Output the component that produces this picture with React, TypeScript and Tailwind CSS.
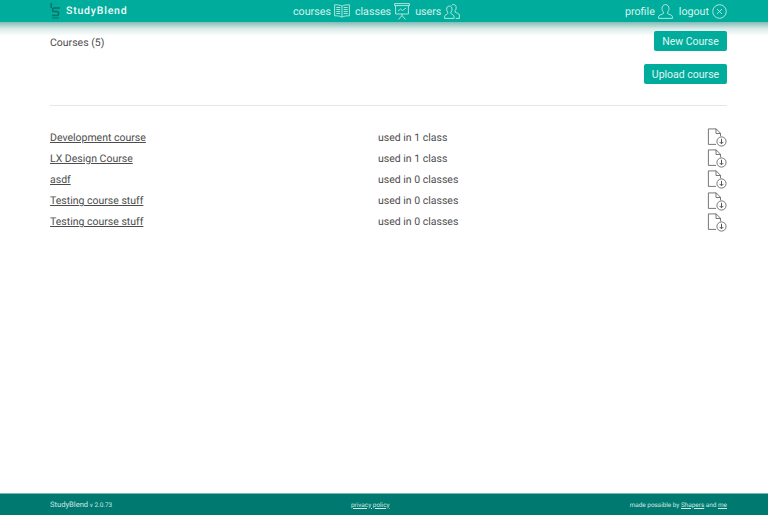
import { ReactNode } from "react";

const courses = [
  { name: "Development course", usage: "used in 1 class" },
  { name: "LX Design Course", usage: "used in 1 class" },
  { name: "asdf", usage: "used in 0 classes" },
  { name: "Testing course stuff", usage: "used in 0 classes" },
  { name: "Testing course stuff", usage: "used in 0 classes" },
];

function BookIcon() {
  return (
    <svg width="16" height="14" viewBox="0 0 16 14" fill="none" stroke="currentColor" strokeWidth="0.8">
      <path d="M8 2.200C6.500 1 3.500.8.600.8v11c3 0 5.900.2 7.400 1.400 1.500-1.200 4.400-1.400 7.400-1.400V.8C12.500.8 9.500 1 8 2.200z" />
      <path d="M8 2.200v11M2.300 3.500h4M2.300 5.500h4M2.300 7.500h4M2.300 9.500h4M9.700 3.500h4M9.700 5.500h4M9.700 7.500h4M9.700 9.500h4" />
    </svg>
  );
}

function BoardIcon() {
  return (
    <svg width="16" height="17" viewBox="0 0 16 17" fill="none" stroke="currentColor" strokeWidth="0.8">
      <path d="M.6.6h14.800v2H.6zM1.600 2.600v8.400h12.800V2.600" />
      <path d="M4 8l2.500-2 2 1.500L12 5M8 11v1.500M8 12.500L4.500 16.500M8 12.500l3.500 4" />
    </svg>
  );
}

function UsersIcon() {
  return (
    <svg width="16" height="15" viewBox="0 0 16 15" fill="none" stroke="currentColor" strokeWidth="0.8">
      <path d="M.6 14.400h9.400v-2c0-1.500-2.300-2-3.100-2.800V8.100c.8-.8 1.100-1.800 1.100-3 0-1.800-1-3-2.700-3s-2.700 1.200-2.700 3c0 1.200.3 2.200 1.100 3v1.500C3.500 10.400.6 10.900.6 12.400z" />
      <path d="M7.500 1.300C8 .8 8.700.6 9.500.6c1.700 0 2.700 1.200 2.700 3 0 1.200-.3 2.200-1.100 3v1.500c.8.800 4.300 1.300 4.300 2.800v3.500h-3.800" />
    </svg>
  );
}

function ProfileIcon() {
  return (
    <svg width="15" height="15" viewBox="0 0 15 15" fill="none" stroke="currentColor" strokeWidth="0.8">
      <path d="M.6 14.400h13.800v-1.800c0-1.600-3.700-2.200-4.700-3V7.800c1-.9 1.300-2 1.300-3.300C11 2.200 9.500.6 7.500.6S4 2.200 4 4.500c0 1.300.3 2.400 1.300 3.300v1.800c-1 .8-4.700 1.400-4.700 3z" />
    </svg>
  );
}

function CloseCircleIcon() {
  return (
    <svg width="15" height="15" viewBox="0 0 15 15" fill="none" stroke="currentColor" strokeWidth="0.8">
      <circle cx="7.500" cy="7.500" r="6.800" />
      <path d="M5 5l5 5M10 5l-5 5" />
    </svg>
  );
}

function LogoIcon() {
  return (
    <svg width="11" height="16" viewBox="0 0 11 16" fill="none" stroke="#0a6f68" strokeWidth="1.500">
      <path d="M1.200 0v5" />
      <path d="M10 5H4C2 5 2 8.500 4 8.500h3c2.200 0 2.200 4-.2 4H2" />
      <path d="M2 15h7" strokeWidth="1" />
    </svg>
  );
}

function FileDownloadIcon() {
  return (
    <svg width="20" height="19" viewBox="0 0 20 19" fill="none" stroke="#555" strokeWidth="0.8">
      <path d="M9 16.400H1.400V.9h7.800l4.300 4.400v3" />
      <path d="M9 .9v4.600h4.500" />
      <circle cx="14.500" cy="13.500" r="4.600" />
      <path d="M14.500 10.800v5M12.600 13.900l1.900 1.900 1.900-1.900" strokeWidth="1" />
    </svg>
  );
}

function NavLink({ label, icon }: { label: string; icon: ReactNode }) {
  return (
    <a className="flex items-center gap-[3px]">
      <span className="pt-px">{label}</span>
      {icon}
    </a>
  );
}

export default function App() {
  return (
    <div className="relative flex h-[515px] flex-col overflow-hidden bg-white font-['Roboto',sans-serif] text-[10.500px] leading-[14px] text-[#4d4d4d] [text-rendering:geometricPrecision]">
      <header className="z-10 flex h-[22px] shrink-0 items-center bg-[#00ad9c] pl-[50px] pr-[41px] text-[#d8f2ee]">
        <div className="flex w-[243px] items-center gap-[5px]">
          <LogoIcon />
          <span className="text-[10.500px] font-medium tracking-[0.8px] text-[#f0fbf9]">StudyBlend</span>
        </div>
        <nav className="flex items-center gap-[5px] text-[10.700px]">
          <NavLink label="courses" icon={<BookIcon />} />
          <NavLink label="classes" icon={<BoardIcon />} />
          <NavLink label="users" icon={<UsersIcon />} />
        </nav>
        <nav className="ml-auto flex items-center gap-[6px] text-[10.700px]">
          <NavLink label="profile" icon={<ProfileIcon />} />
          <NavLink label="logout" icon={<CloseCircleIcon />} />
        </nav>
      </header>
      {/* soft shadow under the header */}
      <div className="absolute inset-x-0 top-[22px] h-[14px] bg-gradient-to-b from-[#7fbdb6] via-[#dcecea] to-white" />

      <main className="z-10 flex-1 pl-[50px] pr-[41px]">
        <div className="flex items-start justify-between pt-[9px]">
          <h1 className="pt-[5px] text-[10.500px] font-normal leading-[14px]">Courses (5)</h1>
          <button className="h-[20px] w-[73px] rounded-[2px] bg-[#00ad9c] pt-px text-[10.500px] text-[#e0f5f2]">New Course</button>
        </div>
        <div className="mt-[13px] flex justify-end">
          <button className="h-[20px] w-[83px] rounded-[2px] bg-[#00ad9c] pt-px text-[10.500px] text-[#e0f5f2]">Upload course</button>
        </div>
        <hr className="mt-[21px] border-t border-[#e6e6e6]" />
        <ul className="mt-[21px]">
          {courses.map((course, i) => (
            <li key={i} className="flex h-[21.200px] items-center">
              <a className="w-[328px] underline">{course.name}</a>
              <span className="flex-1">{course.usage}</span>
              <FileDownloadIcon />
            </li>
          ))}
        </ul>
      </main>

      <footer className="flex h-[22px] shrink-0 items-center border-t border-[#7fb9b3] bg-[#007a70] pl-[50px] pr-[41px] text-[6.400px] text-[#cfe6e3]">
        <span className="w-[301px]">
          <span className="text-[7.600px]">StudyBlend</span> v 2.0.73
        </span>
        <a className="underline">privacy policy</a>
        <span className="ml-auto text-right">
          made possible by <a className="underline">Shapers</a> and <a className="underline">me</a>
        </span>
      </footer>
    </div>
  );
}
